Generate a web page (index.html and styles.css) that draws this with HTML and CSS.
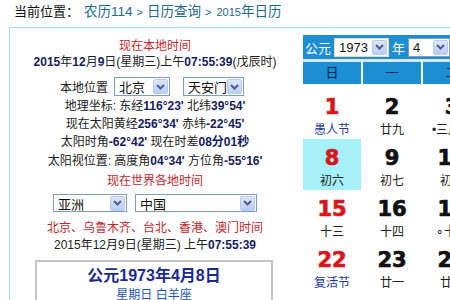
FILE: index.html
```html
<!DOCTYPE html>
<html>
<head>
  <meta charset="utf-8">
  <title>2015年日历</title>
  <link rel="stylesheet" href="styles.css">
</head>
<body>
  <div class="crumb">当前位置：<a href="#" class="first">农历114</a><span class="sep">&gt;</span><a href="#">日历查询</a><span class="sep">&gt;</span><a href="#" class="small"><span class="yr-num">2015</span>年日历</a></div>

  <div class="wrap">
    <div class="left">
      <div class="ln red">现在本地时间</div>
      <div class="ln date"><b>2015</b>年<b>12</b>月<b>9</b>日(星期三)上午<b>07:55:39</b>(戊辰时)</div>
      <div class="selrow loc">
        <span>本地位置</span>
        <span class="sel w56">北京<i class="arr"><svg width="9" height="6" viewBox="0 0 9 6"><path d="M1 1l3.5 3.5L8 1" fill="none" stroke="#4a5f8c" stroke-width="2"/></svg></i></span>
        <span class="sel w61">天安门<i class="arr"><svg width="9" height="6" viewBox="0 0 9 6"><path d="M1 1l3.5 3.5L8 1" fill="none" stroke="#4a5f8c" stroke-width="2"/></svg></i></span>
      </div>
      <div class="ln geo">地理坐标: 东经<b>116°23'</b> 北纬<b>39°54'</b></div>
      <div class="ln">现在太阳黄经<b>256°34'</b> 赤纬<b>-22°45'</b></div>
      <div class="ln">太阳时角<b>-62°42'</b> 现在时差<b>08分01秒</b></div>
      <div class="ln sun">太阳视位置: 高度角<b>04°34'</b> 方位角<b>-55°16'</b></div>
      <div class="ln red world">现在世界各地时间</div>
      <div class="selrow zone">
        <span class="sel w74">亚洲<i class="arr"><svg width="9" height="6" viewBox="0 0 9 6"><path d="M1 1l3.5 3.5L8 1" fill="none" stroke="#4a5f8c" stroke-width="2"/></svg></i></span>
        <span class="sel w122">中国<i class="arr"><svg width="9" height="6" viewBox="0 0 9 6"><path d="M1 1l3.5 3.5L8 1" fill="none" stroke="#4a5f8c" stroke-width="2"/></svg></i></span>
      </div>
      <div class="ln red cities">北京、乌鲁木齐、台北、香港、澳门时间</div>
      <div class="ln cities-time">2015年12月9日(星期三) 上午<b>07:55:39</b></div>
      <div class="picked">
        <div class="picked-date">公元1973年4月8日</div>
        <div class="picked-sub">星期日 白羊座</div>
      </div>
    </div>

    <div class="cal">
      <div class="cal-top">
        <span>公元</span>
        <span class="sel yr">1973<i class="arr"><svg width="9" height="6" viewBox="0 0 9 6"><path d="M1 1l3.5 3.5L8 1" fill="none" stroke="#4a5f8c" stroke-width="2"/></svg></i></span>
        <span>年</span>
        <span class="sel mo">4<i class="arr"><svg width="9" height="6" viewBox="0 0 9 6"><path d="M1 1l3.5 3.5L8 1" fill="none" stroke="#4a5f8c" stroke-width="2"/></svg></i></span>
        <span>月</span>
      </div>
      <div class="cal-head">
        <span>日</span><span>一</span><span>二</span><span>三</span><span>四</span><span>五</span><span>六</span>
      </div>
      <div class="cal-body">
        <div class="day red"><b>1</b><em class="fest">愚人节</em></div>
        <div class="day"><b>2</b><em>廿九</em></div>
        <div class="day"><b>3</b><em>•三月大</em></div>
        <div class="day"><b>4</b><em>初二</em></div>
        <div class="day"><b>5</b><em class="fest">清明</em></div>
        <div class="day"><b>6</b><em>初四</em></div>
        <div class="day red"><b>7</b><em>初五</em></div>

        <div class="day red today"><b>8</b><em>初六</em></div>
        <div class="day"><b>9</b><em>初七</em></div>
        <div class="day"><b>10</b><em>初八</em></div>
        <div class="day"><b>11</b><em>初九</em></div>
        <div class="day"><b>12</b><em>初十</em></div>
        <div class="day"><b>13</b><em>十一</em></div>
        <div class="day red"><b>14</b><em>十二</em></div>

        <div class="day red"><b>15</b><em>十三</em></div>
        <div class="day"><b>16</b><em>十四</em></div>
        <div class="day"><b>17</b><em>∘十五</em></div>
        <div class="day"><b>18</b><em>十六</em></div>
        <div class="day"><b>19</b><em>十七</em></div>
        <div class="day"><b>20</b><em class="fest">谷雨</em></div>
        <div class="day red"><b>21</b><em>十九</em></div>

        <div class="day red"><b>22</b><em class="fest">复活节</em></div>
        <div class="day"><b>23</b><em>廿一</em></div>
        <div class="day"><b>24</b><em>廿二</em></div>
        <div class="day"><b>25</b><em>廿三</em></div>
        <div class="day"><b>26</b><em>廿四</em></div>
        <div class="day"><b>27</b><em>廿五</em></div>
        <div class="day red"><b>28</b><em>廿六</em></div>
      </div>
    </div>
  </div>
</body>
</html>
```

FILE: styles.css
```css
* {
  box-sizing: border-box;
}
body {
  margin: 0;
  width: 450px;
  height: 300px;
  overflow: hidden;
  background-color: #fff;
  color: #222;
  font-family: "Liberation Sans", "Noto Sans CJK SC", sans-serif;
  font-size: 12px;
}
a {
  color: #1c6b88;
  text-decoration: none;
}
b {
  color: #161b5e;
}

/* breadcrumb */
.crumb {
  height: 27px;
  padding-left: 14px;
  line-height: 24px;
  font-size: 13px;
  color: #111;
  white-space: nowrap;
}
.crumb a {
  font-size: 13.5px;
}
.crumb .first {
  margin-left: 5px;
}
.crumb .sep {
  color: #1c6b88;
  font-size: 11px;
  margin: 0 4px;
}
.crumb .small {
  margin-left: 1px;
}
.crumb .yr-num {
  font-size: 11px;
}

.wrap {
  display: flex;
  margin-left: 9px;
  border-top: 1px solid #a9dde6;
  border-left: 1px solid #a9dde6;
}

/* left info column */
.left {
  width: 290px;
  flex-shrink: 0;
  padding-top: 10px;
  text-align: center;
}
.ln {
  line-height: 18px;
  white-space: nowrap;
}
.red {
  color: #c0282d;
}
.left > .red:first-child,
.date {
  line-height: 16px;
}
.geo {
  margin-top: 1px;
}
.sun {
  margin-top: 1px;
}
.world {
  margin-top: 2px;
}
.cities {
  margin-top: 8px;
  line-height: 17px;
}
.cities-time {
  line-height: 17px;
}

.selrow {
  display: flex;
  justify-content: center;
  align-items: center;
  white-space: nowrap;
}
.loc {
  margin-top: 7px;
  gap: 6px;
  padding-right: 6px;
}
.loc .sel + .sel {
  margin-left: 7px;
}
.zone {
  margin-top: 4px;
  gap: 8px;
}

/* fake select boxes */
.sel {
  display: inline-flex;
  align-items: center;
  justify-content: space-between;
  height: 19px;
  padding-left: 4px;
  border: 1px solid #7f9db9;
  background-color: #fff;
  color: #111;
  font-size: 13px;
  text-align: left;
}
.sel .arr {
  display: flex;
  align-items: center;
  justify-content: center;
  width: 15px;
  height: 15px;
  margin-right: 1px;
  border: 1px solid #b7c9ef;
  border-radius: 2px;
  background: linear-gradient(#dde7fd, #b9cdf5);
}
.w56 { width: 56px; }
.w61 { width: 61px; }
.w74 { width: 74px; height: 18px; }
.w122 { width: 122px; height: 18px; }

.picked {
  width: 238px;
  height: 60px;
  margin: 6px 0 0 25px;
  padding-top: 3px;
  border: 2px solid #c4c4c4;
  border-bottom: 0;
}
.picked-date {
  font-size: 16px;
  font-weight: bold;
  color: #1b2a8e;
  line-height: 22px;
}
.picked-sub {
  color: #1d58b0;
  font-size: 12px;
  line-height: 16px;
}

/* calendar */
.cal {
  width: 418px;
  flex-shrink: 0;
  margin: 7px 0 0 3px;
}
.cal-top {
  display: flex;
  align-items: center;
  height: 24px;
  padding-left: 2px;
  background-color: #1e8ed3;
  color: #fff;
  font-size: 13px;
  white-space: nowrap;
}
.cal-top .sel {
  margin: 0 3px;
}
.cal-top .yr {
  width: 55px;
  border-color: #e6e0a8;
}
.cal-top .mo {
  width: 42px;
}
.cal-head {
  display: grid;
  grid-template-columns: repeat(7, 58px);
  column-gap: 2px;
  border-top: 3px solid #d3e9f6;
}
.cal-head span {
  background-color: #1e8ed3;
  color: #0c2748;
  line-height: 22px;
  font-size: 13px;
  text-align: center;
}
.cal-body {
  display: grid;
  grid-template-columns: repeat(7, 58px);
  grid-auto-rows: 51px;
  column-gap: 2px;
  margin-top: 4px;
}
.day {
  padding-top: 6px;
  text-align: center;
}
.day b {
  display: block;
  font-family: "DejaVu Sans", sans-serif;
  font-size: 21px;
  line-height: 26px;
  color: #111;
  -webkit-text-stroke: 0.7px currentColor;
}
.day.red b {
  color: #d8161b;
}
.day em {
  display: block;
  margin-top: 2px;
  font-style: normal;
  font-size: 12px;
  line-height: 16px;
  color: #222;
  white-space: nowrap;
}
.day em.fest {
  color: #1d3a9c;
}
.day.today {
  background-color: #a6f1f9;
}
```
